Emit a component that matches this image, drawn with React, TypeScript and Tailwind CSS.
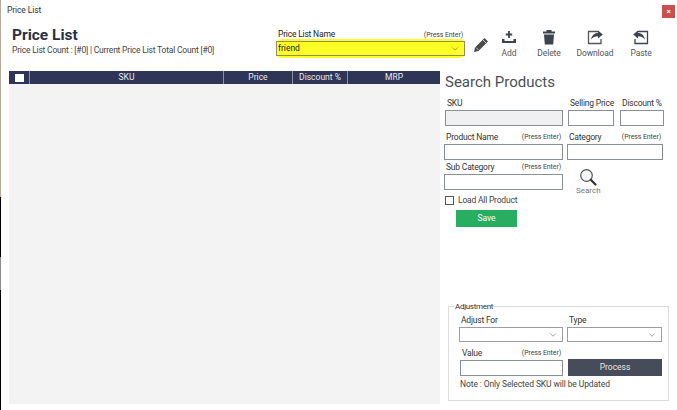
import { ChevronDown } from "lucide-react";

const font = "font-['Roboto','Open_Sans',sans-serif]";

const PressEnter = () => <span className="whitespace-nowrap text-[7px] tracking-[-0.1px] text-[#444]">(Press Enter)</span>;

const Box = ({ className = "" }: { className?: string }) => (
  <div className={`border border-[#8a8f96] bg-white ${className}`} />
);

const Combo = ({ className = "" }: { className?: string }) => (
  <div className={`flex items-center justify-end border border-[#9a9da3] bg-white pr-1 ${className}`}>
    <ChevronDown size={10} className="text-[#666]" strokeWidth={1.5} />
  </div>
);

const Field = ({ label, hint, children, className = "" }: { label: string; hint?: boolean; children: React.ReactNode; className?: string }) => (
  <div className={`flex flex-col ${className}`}>
    <div className="flex h-[13px] items-center justify-between whitespace-nowrap px-[2px] text-[8.5px] leading-none tracking-[-0.2px] text-[#333]">
      <span>{label}</span>
      {hint && <PressEnter />}
    </div>
    {children}
  </div>
);

const ToolButton = ({ label, className = "", children }: { label: string; className?: string; children: React.ReactNode }) => (
  <div className={`flex flex-col items-center ${className}`}>
    <svg viewBox="0 0 16 16" className="h-[16px] w-[16px]">{children}</svg>
    <span className="mt-[4px] text-[8.5px] leading-none tracking-[-0.1px] text-[#555]">{label}</span>
  </div>
);

export default function App() {
  return (
    <div className={`${font} relative flex h-[410px] w-[677px] flex-col overflow-hidden bg-white`}>
      {/* leftover desktop showing at the window edge */}
      <div className="absolute left-0 top-0 flex h-full w-[1px] flex-col">
        <div className="h-[197px] bg-[#b8a99a]" />
        <div className="h-[60px] bg-black" />
        <div className="h-[33px] bg-[#8f8a90]" />
        <div className="flex-1 bg-black" />
      </div>

      {/* title bar */}
      <div className="flex h-[22px] items-start justify-between pl-[7px] pr-[2px] pt-[4px]">
        <span className="text-[8.5px] leading-[12px] tracking-[-0.1px] text-[#333]">Price List</span>
        <div className="mt-[1px] flex h-[13px] w-[13px] items-center justify-center bg-[#c9504f] text-[8px] font-bold leading-none text-white">×</div>
      </div>

      {/* header */}
      <div className="flex h-[49px] items-start pl-[12px]">
        <div className="w-[264px] pt-[4px]">
          <div className="text-[15.500px] font-bold leading-[18px] text-[#2b3045]">Price List</div>
          <div className="mt-[1px] text-[8.500px] leading-[11px] tracking-[-0.2px] text-[#444]">Price List Count : [#0] | Current Price List Total Count [#0]</div>
        </div>
        <div className="flex w-[189px] flex-col pt-[6px]">
          <div className="flex h-[11px] items-end justify-between px-[2px] text-[8.500px] leading-none tracking-[-0.2px] text-[#222]">
            <span className="mb-[1px]">Price List Name</span>
            <PressEnter />
          </div>
          <div className="rounded-[5px] bg-[#ffff26] py-[2px]">
            <div className="flex h-[15px] items-center justify-between border border-[#8f8f60] pl-[1px] pr-[4px] text-[8.500px] leading-none text-[#222]">
              <span>friend</span>
              <ChevronDown size={10} className="text-[#666]" strokeWidth={1.5} />
            </div>
          </div>
        </div>
        <svg viewBox="0 0 16 16" className="ml-[8px] mt-[15px] h-[16px] w-[16px]">
          <path d="M11.500 1 15 4.500 5.500 14 1 15l1-4.500Z" fill="#4a4a4a" />
          <path d="M3 10.500 5.500 13M10 3l3 3" stroke="#fff" strokeWidth=".7" />
        </svg>
        <div className="mt-[7px] flex">
          <ToolButton label="Add" className="ml-[8px] w-[24px]">
            <path d="M1 10v4h14v-4h-2.500v2H3.500v-2Z" fill="#3d4450" />
            <path d="M8 2v7M4.800 5.500h6.400" stroke="#3d4450" strokeWidth="1.800" />
          </ToolButton>
          <ToolButton label="Delete" className="ml-[14px] w-[28px]">
            <path d="M5.500 2.500V1h5v1.500H14V4.500H2V2.500Z" fill="#3d4450" />
            <path d="M3 5.500h10l-.8 10H3.800Z" fill="#3d4450" />
          </ToolButton>
          <ToolButton label="Download" className="ml-[12px] w-[40px]">
            <path d="M14 10v4.500H1.500v-12H11" fill="none" stroke="#555" strokeWidth="1.300" />
            <path d="M15.800 5.500 11 1.500v2.500C7 4 5 6.500 4 10.500 6 8 8 7.200 11 7.200v2.300Z" fill="#3d4450" />
          </ToolButton>
          <ToolButton label="Paste" className="ml-[12px] w-[28px]">
            <path d="M2 10v4.500h12.500v-12H5" fill="none" stroke="#3d4450" strokeWidth="1.300" />
            <path d="M.2 5.500 5 1.500v2.500c4 0 6 2.500 7 6.500C10 8 8 7.200 5 7.200v2.300Z" fill="#3d4450" />
          </ToolButton>
        </div>
      </div>

      {/* body */}
      <div className="flex pl-[9px]">
        <div className="h-[333px] w-[431px] bg-[#f3f3f3]">
          <div className="flex h-[13px] items-center bg-[#2f3557] text-center text-[8.500px] leading-none text-[#e8e8ee]">
            <div className="flex h-full w-[21px] items-center justify-center border-r border-[#8b8fa5]">
              <div className="h-[8px] w-[9px] bg-white" />
            </div>
            <div className="flex h-full w-[194px] items-center justify-center border-r border-[#8b8fa5]">SKU</div>
            <div className="flex h-full w-[69px] items-center justify-center border-r border-[#8b8fa5]">Price</div>
            <div className="flex h-full w-[55px] items-center justify-center border-r border-[#8b8fa5]">Discount %</div>
            <div className="flex h-full flex-1 items-center justify-center">MRP</div>
          </div>
        </div>

        <div className="ml-[4px] flex h-[333px] w-[224px] flex-col">
          <div className="ml-[1px] h-[23px] text-[15px] leading-[23px] text-[#4a5058]">Search Products</div>

          <div className="mt-[3px] flex">
            <Field label="SKU" className="ml-[1px] w-[118px]">
              <div className="h-[16px] border border-[#8a8f96] bg-[#f0f0f0]" />
            </Field>
            <Field label="Selling Price" className="ml-[5px] w-[46px]">
              <Box className="h-[16px]" />
            </Field>
            <Field label="Discount %" className="ml-[6px] w-[44px]">
              <Box className="h-[16px]" />
            </Field>
          </div>

          <div className="mt-[5px] flex">
            <Field label="Product Name" hint className="w-[119px]">
              <Box className="h-[16px]" />
            </Field>
            <Field label="Category" hint className="ml-[4px] w-[96px]">
              <Box className="h-[16px]" />
            </Field>
          </div>

          <div className="mt-[1px] flex">
            <Field label="Sub Category" hint className="w-[119px]">
              <Box className="h-[16px]" />
            </Field>
            <div className="-mb-[6px] ml-[13px] mt-[7px] flex flex-col items-center">
              <svg viewBox="0 0 18 18" className="h-[18px] w-[18px]">
                <circle cx="7.500" cy="7.500" r="5.800" fill="#f4f6f6" stroke="#555" strokeWidth="1.200" />
                <path d="M11.800 11.800 16.500 16.500" stroke="#333" strokeWidth="2.200" strokeLinecap="round" />
              </svg>
              <span className="mt-[1px] text-[8px] leading-none text-[#777]">Search</span>
            </div>
          </div>

          <div className="mt-[6px] flex items-center">
            <div className="ml-[1px] h-[9px] w-[9px] border border-[#555] bg-white" />
            <span className="ml-[4px] text-[8.500px] leading-none tracking-[-0.2px] text-[#444]">Load All Product</span>
          </div>

          <div className="ml-[12px] mt-[5px] flex h-[17px] w-[61px] items-center justify-center bg-[#27ae60] text-[8.500px] leading-none text-white">Save</div>

          {/* adjustment group */}
          <fieldset className="ml-[4px] mt-[75px] h-[99px] w-[221px] border border-[#dcdcdc] pl-[10px] pr-[5px]">
            <legend className="ml-[-4px] text-[8px] leading-[9px] tracking-[-0.3px] text-[#333]">Adjustment</legend>
            <div className="mt-[3px] flex">
              <Field label="Adjust For" className="w-[104px]">
                <Combo className="h-[15px]" />
              </Field>
              <Field label="Type" className="ml-[4px] w-[95px]">
                <Combo className="h-[15px]" />
              </Field>
            </div>
            <div className="mt-[5px] flex items-end">
              <Field label="Value" hint className="ml-[1px] w-[103px]">
                <Box className="h-[16px]" />
              </Field>
              <div className="ml-[5px] flex h-[17px] w-[94px] items-center justify-center bg-[#464c59] text-[8.500px] leading-none text-[#e6e6e6]">Process</div>
            </div>
            <div className="ml-[1px] mt-[3px] text-[8.500px] leading-[11px] tracking-[-0.1px] text-[#444]">Note : Only Selected SKU will be Updated</div>
          </fieldset>
        </div>
      </div>
    </div>
  );
}
